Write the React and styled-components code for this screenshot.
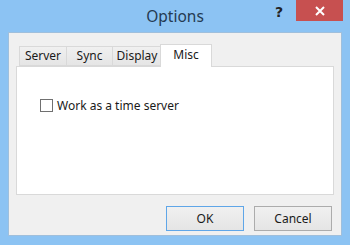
import React from "react";
import styled, { createGlobalStyle } from "styled-components";

const Global = createGlobalStyle`
  html, body { margin: 0; padding: 0; }
  body { font-family: "Noto Sans", "Open Sans", sans-serif; }
  #root { width: 350px; height: 245px; }
`;

const Window = styled.div`
  width: 350px;
  height: 245px;
  box-sizing: border-box;
  background: #8cc3f3;
  display: flex;
  flex-direction: column;
  padding: 0 8px 9px 8px;
`;

const TitleBar = styled.div`
  height: 32px;
  flex: none;
  display: flex;
  align-items: flex-start;
`;

const Title = styled.div`
  flex: 1;
  text-align: center;
  font-size: 15.5px;
  color: #243a52;
  line-height: 32px;
  margin-left: 73px;
`;

const HelpButton = styled.div`
  width: 20px;
  height: 21px;
  font: bold 14px "DejaVu Sans", sans-serif;
  color: #222;
  display: flex;
  align-items: center;
  justify-content: center;
  margin-right: 7px;
  margin-top: 1px;
`;

const CloseButton = styled.div`
  width: 47px;
  height: 21px;
  background: #c75050;
  display: flex;
  align-items: center;
  justify-content: center;
  margin-right: -1px;
`;

const Client = styled.div`
  flex: 1;
  background: #f0f0f0;
  border: 1px solid #9fbfdc;
  box-sizing: border-box;
  display: flex;
  flex-direction: column;
  padding: 10px 7px 0 7px;
  font-size: 12px;
  color: #1a1a1a;
`;

const TabRow = styled.div`
  height: 23px;
  display: flex;
  align-items: flex-end;
  padding-left: 3px;
  position: relative;
  z-index: 1;
`;

const Tab = styled.div`
  box-sizing: border-box;
  width: ${(p) => p.w}px;
  height: ${(p) => (p.active ? 23 : 20)}px;
  margin: ${(p) => (p.active ? "0 -2px -1px -2px" : "0")};
  background: ${(p) => (p.active ? "#ffffff" : "linear-gradient(#f0f0f0, #e5e5e5)")};
  border: 1px solid #d9d9d9;
  border-bottom: ${(p) => (p.active ? "none" : "1px solid #d9d9d9")};
  margin-left: ${(p) => (p.first ? 0 : p.active ? -2 : -1)}px;
  display: flex;
  align-items: ${(p) => (p.active ? "flex-start" : "center")};
  padding-top: ${(p) => (p.active ? 2 : 0)}px;
  justify-content: center;
  position: relative;
  line-height: 16px;
`;

const Panel = styled.div`
  height: 129px;
  box-sizing: border-box;
  background: #ffffff;
  border: 1px solid #d9d9d9;
  padding: 30px 0 0 23px;
`;

const CheckRow = styled.label`
  display: flex;
  align-items: center;
  gap: 4px;
`;

const Box = styled.span`
  width: 13px;
  height: 13px;
  box-sizing: border-box;
  border: 1px solid #707070;
  background: #ffffff;
  display: inline-block;
`;

const Footer = styled.div`
  display: flex;
  justify-content: flex-end;
  gap: 10px;
  margin-top: 11px;
  padding-right: 2px;
`;

const Button = styled.div`
  width: 78px;
  height: 25px;
  box-sizing: border-box;
  border: 1px solid ${(p) => (p.primary ? "#5fa6e8" : "#acacac")};
  background: linear-gradient(#f0f0f0, #e5e5e5);
  display: flex;
  align-items: center;
  justify-content: center;
  font-size: 12px;
  color: #1a1a1a;
`;

export default function App() {
  return (
    <>
      <Global />
      <Window>
        <TitleBar>
          <Title>Options</Title>
          <HelpButton>?</HelpButton>
          <CloseButton>
            <svg width="10" height="10" viewBox="0 0 10 10">
              <path d="M1 1 L9 9 M9 1 L1 9" stroke="#fff" strokeWidth="2" />
            </svg>
          </CloseButton>
        </TitleBar>
        <Client>
          <TabRow>
            <Tab first w={48}>Server</Tab>
            <Tab w={47}>Sync</Tab>
            <Tab w={50}>Display</Tab>
            <Tab active w={52}>Misc</Tab>
          </TabRow>
          <Panel>
            <CheckRow>
              <Box />
              <span>Work as a time server</span>
            </CheckRow>
          </Panel>
          <Footer>
            <Button primary>OK</Button>
            <Button>Cancel</Button>
          </Footer>
        </Client>
      </Window>
    </>
  );
}
